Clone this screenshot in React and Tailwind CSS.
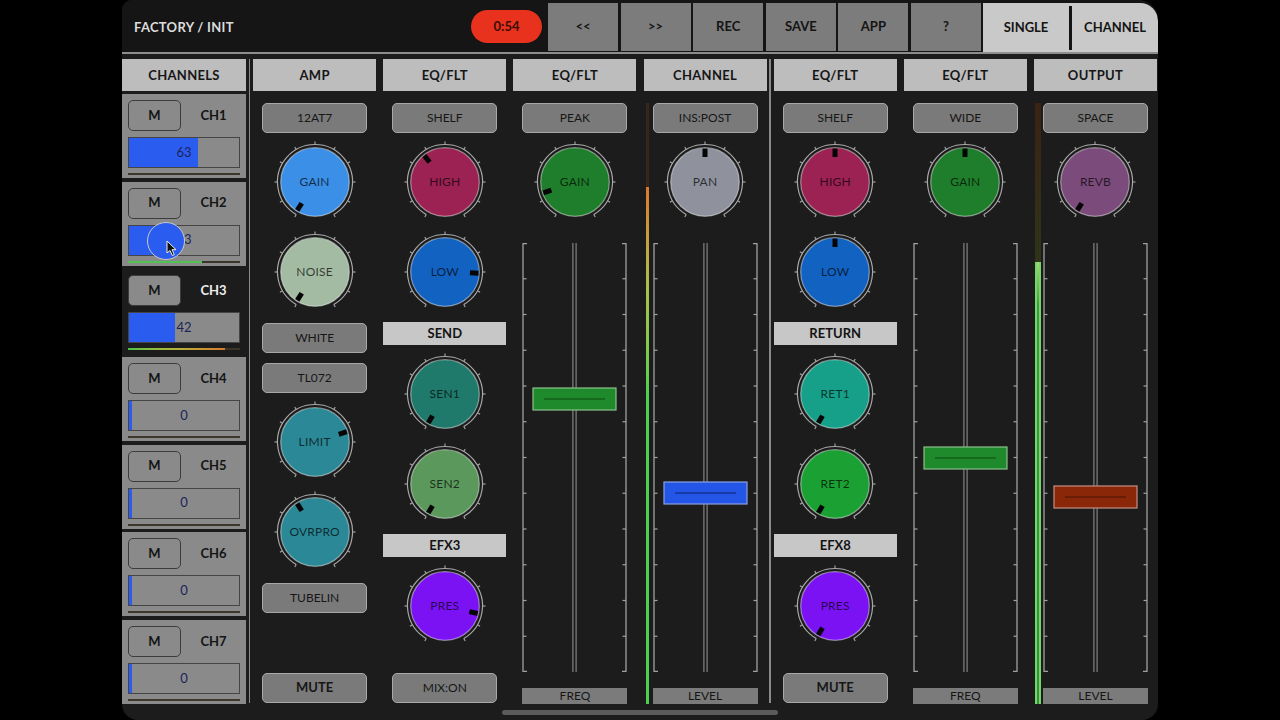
import React from 'react'

const TOP_BUTTONS = ['<<', '>>', 'REC', 'SAVE', 'APP', '?']

const CHANNELS = [
  { n: 1, value: '63', fill: 63, meter: 'dark' },
  { n: 2, value: '43', fill: 43, meter: 'green', touch: true },
  { n: 3, value: '42', fill: 42, meter: 'hot', selected: true },
  { n: 4, value: '0', fill: 2.5, meter: 'dark' },
  { n: 5, value: '0', fill: 2.5, meter: 'dark' },
  { n: 6, value: '0', fill: 2.5, meter: 'dark' },
  { n: 7, value: '0', fill: 2.5, meter: 'dark' },
]

function Knob({ label, color, angle, className = '' }) {
  const rad = (d) => (d * Math.PI) / 180
  const pt = (a, r) => [42 + r * Math.sin(rad(a)), 42 - r * Math.cos(rad(a))]
  const [sx, sy] = pt(-150, 37.5)
  const [ex, ey] = pt(150, 37.5)
  const ticks = []
  for (let a = -150; a <= 150; a += 30) ticks.push(a)
  return (
    <div className={`relative w-[84px] h-[84px] shrink-0 ${className}`}>
      <svg width="84" height="84" viewBox="0 0 84 84" className="block">
        <path d={`M ${sx} ${sy} A 37.5 37.5 0 1 1 ${ex} ${ey}`} fill="none" stroke="#a9a9a9" strokeWidth="1.2" />
        {ticks.map((a) => {
          const [x1, y1] = pt(a, 37.5)
          const [x2, y2] = pt(a, 40.5)
          return <line key={a} x1={x1} y1={y1} x2={x2} y2={y2} stroke="#a9a9a9" strokeWidth="1.1" />
        })}
        <circle cx="42" cy="42" r="34.3" fill={color} stroke="rgba(255,255,255,0.45)" strokeWidth="1.2" />
        <rect x="39.5" y="8.5" width="5" height="8.5" fill="#050505" transform={`rotate(${angle} 42 42)`} />
      </svg>
      <div className="absolute inset-0 flex items-center justify-center text-[12px] text-black/70 tracking-[0.2px]">
        {label}
      </div>
    </div>
  )
}

function Btn({ children, bold, className = '' }) {
  return (
    <div
      className={`w-[105px] h-[30px] shrink-0 rounded-[5px] border-[1.5px] border-[#a8a8a8] bg-[#7a7a7a] flex items-center justify-center text-[#161616] ${
        bold ? 'text-[13px] font-bold' : 'text-[12px]'
      } ${className}`}
    >
      {children}
    </div>
  )
}

function Section({ children, className = '' }) {
  return (
    <div className={`w-[123px] -mx-[9px] h-[23px] shrink-0 bg-[#c7c7c7] flex items-center justify-center text-[13px] font-bold text-[#141414] ${className}`}>
      {children}
    </div>
  )
}

function Fader({ top, color, border, line, className = '' }) {
  const W = 105
  const H = 429
  const ticks = Array.from({ length: 11 }, (_, i) => ((i + 1) * H) / 12)
  const c = W / 2
  return (
    <svg width={W} height={H} viewBox={`0 0 ${W} ${H}`} className={`block shrink-0 ${className}`}>
      <path d={`M 5 0.7 H 1 V ${H - 0.7} H 5`} fill="none" stroke="#a0a0a0" strokeWidth="1.3" />
      <path d={`M ${W - 5} 0.7 H ${W - 1} V ${H - 0.7} H ${W - 5}`} fill="none" stroke="#a0a0a0" strokeWidth="1.3" />
      {ticks.map((y) => (
        <g key={y}>
          <line x1="1" y1={y} x2="4.5" y2={y} stroke="#a0a0a0" strokeWidth="1.2" />
          <line x1={W - 1} y1={y} x2={W - 4.5} y2={y} stroke="#a0a0a0" strokeWidth="1.2" />
        </g>
      ))}
      <line x1={c - 1.6} y1="0" x2={c - 1.6} y2={H} stroke="#8c8c8c" strokeWidth="1.1" />
      <line x1={c + 1.6} y1="0" x2={c + 1.6} y2={H} stroke="#8c8c8c" strokeWidth="1.1" />
      <rect x="11" y={top} width="83" height="22" fill={color} stroke={border} strokeWidth="1.2" />
      <line x1="22" y1={top + 11} x2="83" y2={top + 11} stroke={line} strokeWidth="1.2" />
    </svg>
  )
}

function Tag({ children, className = '' }) {
  return (
    <div className={`w-[105px] h-[16px] shrink-0 bg-[#7b7b7b] flex items-center justify-center text-[12px] text-[#161616] ${className}`}>
      {children}
    </div>
  )
}

function Header({ children, className = '' }) {
  return (
    <div className={`h-[32px] shrink-0 bg-[#bdbdbd] flex items-center justify-center pt-[2px] text-[13px] font-bold text-[#161616] tracking-[0.3px] ${className}`}>
      {children}
    </div>
  )
}

function Strip({ title, meter, children }) {
  return (
    <div className="w-[123px] shrink-0 flex flex-col">
      <Header>{title}</Header>
      <div className="flex h-[613px]">
        <div className="w-[9px] shrink-0 pt-[12px] flex">{meter}</div>
        <div className="w-[105px] shrink-0 flex flex-col items-center pt-[12px]">{children}</div>
        <div className="w-[9px] shrink-0" />
      </div>
    </div>
  )
}

function Gap({ line }) {
  return (
    <div className="w-[7.15px] shrink-0 flex justify-center">
      {line && <div className="w-[1.5px] h-[644px] bg-[#8a8a8a]" />}
    </div>
  )
}

function ChannelMeter({ kind }) {
  if (kind === 'green') {
    return (
      <div className="mt-[5px] h-[2px] flex bg-[#3a3528]">
        <div className="w-[66%] bg-[#4fc451]" />
      </div>
    )
  }
  if (kind === 'hot') {
    return (
      <div className="mt-[5px] h-[2px] flex bg-[#3a3528]">
        <div className="w-[87%] bg-linear-to-r from-[#43c24a] via-[#b6b43a] to-[#d47a2c]" />
      </div>
    )
  }
  return <div className="mt-[5px] h-[2px] bg-[#3d3729]" />
}

function ChannelCard({ n, value, fill, meter, selected, touch }) {
  return (
    <div className={`relative h-[84px] shrink-0 px-[6px] pt-[6px] ${selected ? 'bg-[#1c1c1c]' : 'bg-[#8a8a8a]'}`}>
      <div className="flex items-center">
        <div className="w-[53px] h-[31px] rounded-[5px] border-[1.5px] border-[#3c3c3c] bg-[#8a8a8a] flex items-center justify-center text-[13px] font-bold text-[#141414]">
          M
        </div>
        <div className={`flex-1 pl-[6px] text-center text-[13px] font-bold ${selected ? 'text-[#ececec]' : 'text-[#141414]'}`}>
          CH{n}
        </div>
      </div>
      <div className="relative mt-[6px] h-[31px] border-[1.5px] border-[#454545] bg-[#8a8a8a]">
        <div className="h-full bg-[#2b5cf0]" style={{ width: `${fill}%` }} />
        <div className="absolute inset-0 flex items-center justify-center text-[13px] text-[#1b2458]">{value}</div>
      </div>
      <ChannelMeter kind={meter} />
      {touch && (
        <>
          <div className="absolute left-[25px] top-[40px] w-[38px] h-[38px] rounded-full border-[1.5px] border-[#c9c9c9] bg-[#2b5cf0]" />
          <svg width="12" height="17" viewBox="0 0 12 17" className="absolute left-[44px] top-[58px]">
            <path d="M1 1 L1 13 L4 10.5 L6.3 15.5 L8.3 14.6 L6 9.7 L10 9.7 Z" fill="#111" stroke="#eee" strokeWidth="1" strokeLinejoin="round" />
          </svg>
        </>
      )}
    </div>
  )
}

export default function App() {
  return (
    <div className="w-[1280px] h-[720px] bg-black flex justify-center font-['Lato','Liberation_Sans',sans-serif]">
      <div className="w-[1036px] h-[720px] bg-[#1c1c1c] rounded-tl-[10px] rounded-tr-[20px] rounded-b-[16px] overflow-hidden flex flex-col">
        {/* top bar */}
        <div className="flex h-[52px] shrink-0 bg-[#151515]">
          <div className="pl-[12px] pt-[4px] flex items-center text-[13px] font-bold text-[#dcdcdc] tracking-[0.3px]">FACTORY / INIT</div>
          <div className="ml-auto mt-[10px] w-[71px] h-[33px] rounded-full bg-[#e8321e] flex items-center justify-center text-[13px] font-bold text-[#3a0c04]">
            0:54
          </div>
          <div className="ml-[6px] mt-[3px] flex gap-[2.6px]">
            {TOP_BUTTONS.map((b) => (
              <div key={b} className="w-[70px] h-[48px] bg-[#7c7c7c] flex items-center justify-center text-[13px] font-bold text-[#141414]">
                {b}
              </div>
            ))}
          </div>
          <div className="ml-[2px] mt-[3px] w-[175px] h-[49px] bg-[#c9c9c9] rounded-tr-[18px] flex items-center">
            <div className="flex-1 text-center text-[13px] font-bold text-[#141414]">SINGLE</div>
            <div className="w-[3px] h-[44px] bg-[#141414]" />
            <div className="flex-1 text-center text-[13px] font-bold text-[#141414]">CHANNEL</div>
          </div>
        </div>
        <div className="h-[2px] shrink-0 bg-[#8d8d8d]" />

        {/* mixer */}
        <div className="flex h-[650px] shrink-0 pt-[5px]">
          <div className="w-[124px] shrink-0 flex flex-col">
            <Header>CHANNELS</Header>
            <div className="mt-[3px] flex flex-col gap-[3.67px]">
              {CHANNELS.map((c) => (
                <ChannelCard key={c.n} {...c} />
              ))}
            </div>
          </div>
          <Gap line />

          <Strip title="AMP">
            <Btn>12AT7</Btn>
            <Knob label="GAIN" color="#3b8fe6" angle={-148} className="mt-[7px]" />
            <Knob label="NOISE" color="#a3bba2" angle={-148} className="mt-[6px]" />
            <Btn className="mt-[9px]">WHITE</Btn>
            <Btn className="mt-[10px]">TL072</Btn>
            <Knob label="LIMIT" color="#2b8896" angle={72} className="mt-[7px]" />
            <Knob label="OVRPRO" color="#2b8896" angle={-32} className="mt-[6px]" />
            <Btn className="mt-[9px]">TUBELIN</Btn>
            <Btn bold className="mt-[60px]">MUTE</Btn>
          </Strip>
          <Gap />

          <Strip title="EQ/FLT">
            <Btn>SHELF</Btn>
            <Knob label="HIGH" color="#9b2252" angle={-38} className="mt-[7px]" />
            <Knob label="LOW" color="#1262c2" angle={92} className="mt-[6px]" />
            <Section className="mt-[8px]">SEND</Section>
            <Knob label="SEN1" color="#1f7a6b" angle={-150} className="mt-[7px]" />
            <Knob label="SEN2" color="#5b985b" angle={-150} className="mt-[6px]" />
            <Section className="mt-[8px]">EFX3</Section>
            <Knob label="PRES" color="#7a12f4" angle={103} className="mt-[7px]" />
            <Btn className="mt-[25px]">MIX:ON</Btn>
          </Strip>
          <Gap />

          <Strip title="EQ/FLT">
            <Btn>PEAK</Btn>
            <Knob label="GAIN" color="#1f7e2b" angle={-109} className="mt-[7px]" />
            <Fader top={145} color="#1f8a2b" border="#8cc08c" line="#0e4a12" className="mt-[19px]" />
            <Tag className="mt-[16px]">FREQ</Tag>
          </Strip>
          <Gap />

          <Strip
            title="CHANNEL"
            meter={
              <div className="ml-[2px] w-[3px] h-[601px] flex flex-col">
                <div className="h-[84px] bg-[#3a2616]" />
                <div className="flex-1 bg-linear-to-b from-[#d9782e] via-[#a8c24a] via-20% to-[#4fcf4f] to-40%" />
              </div>
            }
          >
            <Btn>INS:POST</Btn>
            <Knob label="PAN" color="#8f929d" angle={0} className="mt-[7px]" />
            <Fader top={239} color="#2356e6" border="#8aa0e0" line="#0c1e66" className="mt-[19px]" />
            <Tag className="mt-[16px]">LEVEL</Tag>
          </Strip>
          <Gap line />

          <Strip title="EQ/FLT">
            <Btn>SHELF</Btn>
            <Knob label="HIGH" color="#9b2252" angle={0} className="mt-[7px]" />
            <Knob label="LOW" color="#1262c2" angle={0} className="mt-[6px]" />
            <Section className="mt-[8px]">RETURN</Section>
            <Knob label="RET1" color="#17a089" angle={-150} className="mt-[7px]" />
            <Knob label="RET2" color="#1ba034" angle={-150} className="mt-[6px]" />
            <Section className="mt-[8px]">EFX8</Section>
            <Knob label="PRES" color="#7a12f4" angle={-150} className="mt-[7px]" />
            <Btn bold className="mt-[25px]">MUTE</Btn>
          </Strip>
          <Gap />

          <Strip title="EQ/FLT">
            <Btn>WIDE</Btn>
            <Knob label="GAIN" color="#1f7e2b" angle={0} className="mt-[7px]" />
            <Fader top={204} color="#1f8a2b" border="#8cc08c" line="#0e4a12" className="mt-[19px]" />
            <Tag className="mt-[16px]">FREQ</Tag>
          </Strip>
          <Gap />

          <Strip
            title="OUTPUT"
            meter={
              <div className="ml-[1px] w-[6px] h-[601px] flex flex-col">
                <div className="h-[159px] bg-linear-to-b from-[#3a2214] to-[#2e3418]" />
                <div className="flex-1 border-x-2 border-[#72d86e] bg-linear-to-b from-[#a8d86a] via-[#3f9a3c] via-10% to-[#3a8f38]" />
              </div>
            }
          >
            <Btn>SPACE</Btn>
            <Knob label="REVB" color="#7b4b7b" angle={-148} className="mt-[7px]" />
            <Fader top={243} color="#8a2708" border="#c79080" line="#4a1404" className="mt-[19px]" />
            <Tag className="mt-[16px]">LEVEL</Tag>
          </Strip>
        </div>

        <div className="mt-[6px] self-center w-[276px] h-[5px] rounded-full bg-[#5b5b5b]" />
      </div>
    </div>
  )
}
